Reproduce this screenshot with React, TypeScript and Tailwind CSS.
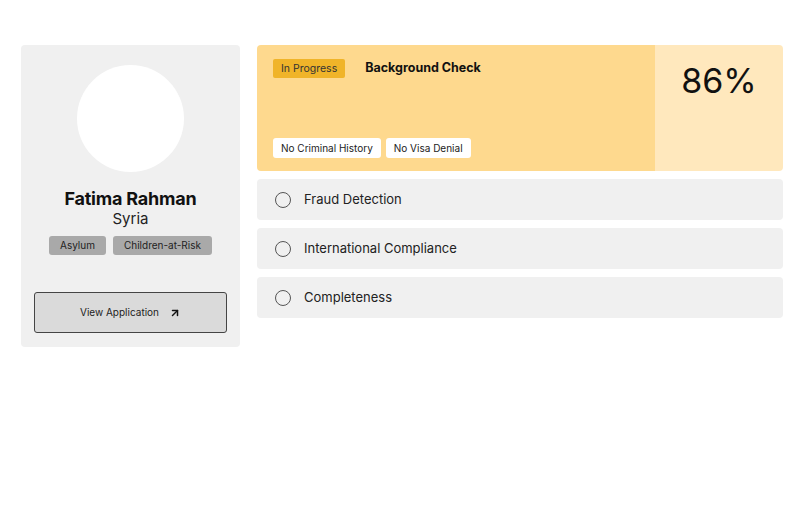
import React from "react";
import { ArrowUpRight } from "lucide-react";

export default function App() {
  const rows = ["Fraud Detection", "International Compliance", "Completeness"];
  return (
    <div className="w-[806px] h-[524px] bg-white" style={{ fontFamily: "Inter, 'Noto Sans', sans-serif" }}>
      <div className="flex items-start gap-[17px] pl-[21px] pt-[45px]">
        <div className="w-[219px] h-[302px] bg-[#f0f0f0] rounded-[4px] flex flex-col items-center pt-[20px]">
          <div className="w-[107px] h-[107px] rounded-full bg-white" />
          <div className="mt-[15px] text-[18px] leading-[24px] font-bold text-[#111] tracking-[-0.2px]">Fatima Rahman</div>
          <div className="text-[15px] leading-[15px] text-[#222]">Syria</div>
          <div className="flex gap-[7px] mt-[10px]">
            <span className="h-[19px] px-[11px] flex items-center rounded-[3px] bg-[#a9a9a9] text-[10px] text-[#222]">Asylum</span>
            <span className="h-[19px] px-[11px] flex items-center rounded-[3px] bg-[#a9a9a9] text-[10px] text-[#222]">Children-at-Risk</span>
          </div>
          <div className="mt-[37px] w-[193px] h-[41px] border border-[#444] rounded-[3px] bg-[#dadada] flex items-center justify-center gap-[10px] text-[10px] text-[#222]">
            <span>View Application</span>
            <ArrowUpRight size={12} strokeWidth={3} className="text-[#111]" />
          </div>
        </div>
        <div className="w-[526px] flex flex-col gap-[8px]">
          <div className="flex h-[126px] rounded-[4px] overflow-hidden">
            <div className="w-[398px] bg-[#fed98e] flex flex-col justify-between pl-[16px] pt-[14px] pb-[13px]">
              <div className="flex items-center gap-[20px]">
                <span className="h-[19px] px-[8px] flex items-center rounded-[2px] bg-[#f0b429] text-[10.5px] text-[#333]">In Progress</span>
                <span className="text-[12.5px] font-bold text-[#111]">Background Check</span>
              </div>
              <div className="flex gap-[5px]">
                <span className="h-[20px] px-[8px] flex items-center rounded-[3px] bg-white text-[10px] text-[#222]">No Criminal History</span>
                <span className="h-[20px] px-[8px] flex items-center rounded-[3px] bg-white text-[10px] text-[#222]">No Visa Denial</span>
              </div>
            </div>
            <div className="flex-1 bg-[#ffe8bd] flex justify-center pt-[15px]">
              <span className="text-[34px] leading-[42px] text-[#111]">86%</span>
            </div>
          </div>
          {rows.map((r) => (
            <div key={r} className="h-[41px] bg-[#f0f0f0] rounded-[4px] flex items-center pl-[18px] gap-[13px]">
              <span className="w-[16px] h-[16px] rounded-full border border-[#555]" />
              <span className="text-[13px] text-[#222]">{r}</span>
            </div>
          ))}
        </div>
      </div>
    </div>
  );
}
